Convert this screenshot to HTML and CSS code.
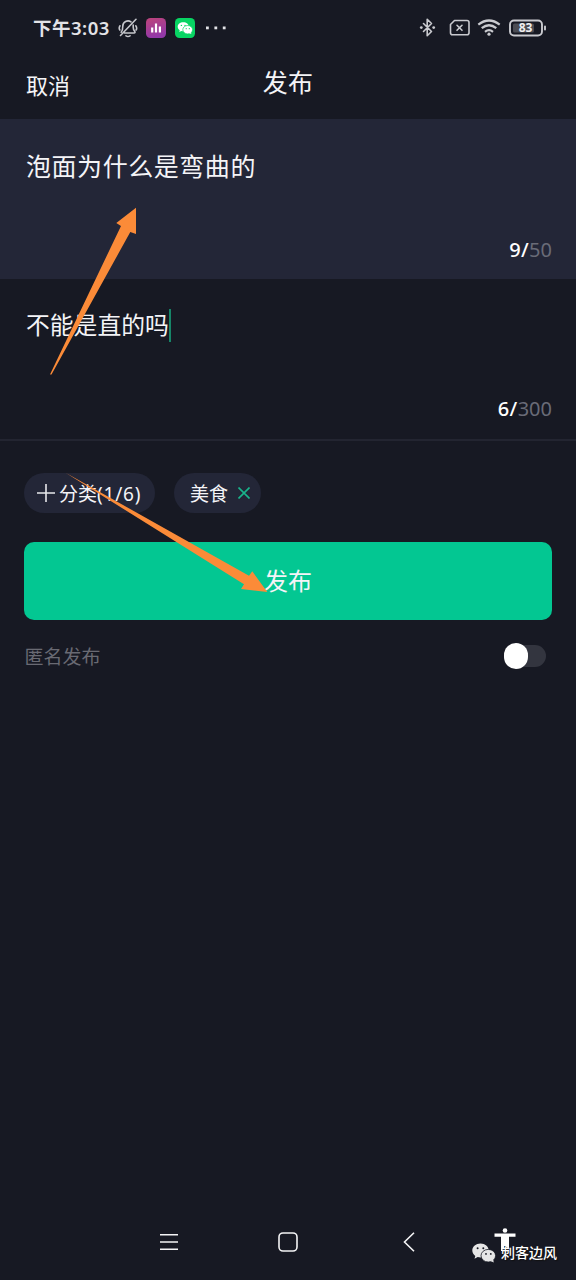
FILE: index.html
```html
<!DOCTYPE html>
<html lang="zh-CN">
<head>
<meta charset="utf-8">
<title>发布</title>
<link rel="stylesheet" href="styles.css">
</head>
<body>
<div class="screen">
  <div class="status">
    <span class="clock">下午3:03</span>
    <svg class="bell" width="20" height="20" viewBox="0 0 20 20" fill="none" stroke="#c6c7cc" stroke-width="1.600" stroke-linecap="round" stroke-linejoin="round">
      <path d="M3.200 14.200C4.800 12.500 4.800 10.500 4.800 8.200A5.200 5.200 0 0 1 13 3.900M15.200 7v2.200c0 2 .4 2.800 1.600 4.400c.5.8.1 1.400-.7 1.400H6.500M8 17.800q2 1.300 4 0M18 1.300L2.500 17.500M2 7.800Q.5 10 1.800 12M17.800 7.800Q19.400 10 18.100 12"/>
    </svg>
    <svg class="stats" width="20" height="20" viewBox="0 0 20 20">
      <defs><linearGradient id="g" x1="0" y1="0" x2=".3" y2="1"><stop offset="0" stop-color="#bd447a"/><stop offset="1" stop-color="#9238a8"/></linearGradient></defs>
      <rect width="20" height="20" rx="4.500" fill="url(#g)"/>
      <path d="M6.200 9.500v5M10 5.500v9M13.900 8.500v6" stroke="#fff" stroke-width="2.200"/>
    </svg>
    <svg class="wechat" width="20" height="20" viewBox="0 0 20 20">
      <rect width="20" height="20" rx="4.500" fill="#08d463"/>
      <path d="M8.300 4.200C5 4.200 2.700 6.200 2.700 8.700c0 1.500.8 2.700 2 3.500l-.4 1.800 2-1c.7.2 1.300.3 2 .3 3.100 0 5.600-2.100 5.600-4.600s-2.500-4.500-5.600-4.500z" fill="#fff"/>
      <ellipse cx="12.700" cy="11.700" rx="4.900" ry="4.200" fill="#fff" stroke="#08d463" stroke-width=".7"/>
      <path d="M14 15l2.300 1-.4-2z" fill="#fff"/>
      <g fill="#08d463"><circle cx="6.400" cy="7.400" r=".7"/><circle cx="10" cy="7.400" r=".7"/><circle cx="11.200" cy="10.700" r=".6"/><circle cx="14.300" cy="10.700" r=".6"/></g>
    </svg>
    <svg class="more" width="22" height="4" viewBox="0 0 22 4" fill="#e3e3e7"><rect x="1" y=".5" width="2.800" height="2.800"/><rect x="9.400" y=".5" width="2.800" height="2.800"/><rect x="17.800" y=".5" width="2.800" height="2.800"/></svg>
    <svg class="system" width="128" height="22" viewBox="0 0 128 22" fill="none" stroke="#c9cacf" stroke-width="1.600" stroke-linejoin="round" stroke-linecap="round">
      <path d="M4.500 6.500l8 8-4.300 4.200V2.300l4.300 4.200-8 8"/>
      <g fill="#c9cacf" stroke="none"><circle cx="2.300" cy="10.600" r="1.400"/><circle cx="14.700" cy="10.600" r="1.400"/></g>
      <path d="M35.500 3.500H48Q50 3.500 50 5.500V15.800Q50 17.800 48 17.800H33.500Q31.500 17.800 31.500 15.800V7.500Z"/>
      <path d="M38 8.300l5 5M43 8.300l-5 5"/>
      <g stroke-width="2.200" stroke-linecap="butt"><path d="M59.300 7.600Q70 -.6 80.700 7.600M62.700 11.200Q70 5.300 77.300 11.200M66 14.800Q70 11.500 74 14.800"/></g>
      <circle cx="70" cy="17.200" r="1.600" fill="#c9cacf" stroke="none"/>
      <rect x="91" y="3.500" width="32" height="15" rx="4" stroke-width="1.900"/>
      <rect x="94" y="6.500" width="21" height="9" rx="1.500" fill="#4b4c53" stroke="none"/>
      <path d="M126 9.500v3" stroke-width="1.900"/>
      <text x="106.500" y="15.300" text-anchor="middle" class="charge">83</text>
    </svg>
  </div>
  <header class="nav"><span class="cancel">取消</span><h1 class="heading">发布</h1></header>
  <section class="field title-field"><p class="title-text">泡面为什么是弯曲的</p><p class="count"><b>9/</b>50</p></section>
  <section class="field body-field"><p class="body-text">不能是直的吗<i class="caret"></i></p><p class="count"><b>6/</b>300</p></section>
  <main class="form">
    <div class="tags">
      <span class="tag add"><svg width="18" height="18" viewBox="0 0 18 18" stroke="#e6e7ea" stroke-width="1.600"><path d="M0 9h18M9 0v18"/></svg><span class="label">分类<span class="ratio">(1/6)</span></span></span>
      <span class="tag food"><span class="label">美食</span><svg width="12" height="12" viewBox="0 0 12 12" stroke="#19b48b" stroke-width="1.600"><path d="M.5.500l11 11M11.500.5l-11 11"/></svg></span>
    </div>
    <div class="submit">发布</div>
    <div class="anonymous"><span class="hint">匿名发布</span><span class="switch"><i class="knob"></i></span></div>
  </main>
  <footer class="system-nav">
    <svg class="menu" width="18" height="18" viewBox="0 0 18 18" stroke="#f4f4f5" stroke-width="1.500"><path d="M0 1.700h18M0 9h18M0 16.300h18"/></svg>
    <svg class="home" width="20" height="20" viewBox="0 0 20 20" fill="none" stroke="#f4f4f5" stroke-width="1.600"><rect x="1" y="1" width="18" height="18" rx="4"/></svg>
    <svg class="back" width="12" height="20" viewBox="0 0 12 20" fill="none" stroke="#f4f4f5" stroke-width="1.600"><path d="M11 .8L1.500 10l9.500 9.200"/></svg>
    <svg class="person" width="22" height="26" viewBox="0 0 22 26" fill="#fff"><circle cx="11" cy="2.500" r="2.300"/><path d="M.5 5.500h21v3.200h-6.500V23h-3v-5h-2v5H7V8.700H.5z"/></svg>
  </footer>
  <div class="watermark">
    <svg width="24" height="20" viewBox="0 0 24 20">
      <path d="M8.500.5C4 .5.300 3.600.300 7.500c0 2.200 1.200 4.100 3 5.400l-.8 2.800 3.200-1.600c1 .3 1.900.4 2.800.4 4.500 0 8.200-3.100 8.200-7S13 .5 8.500.5z" fill="#e6e6e6"/>
      <ellipse cx="16.300" cy="12.700" rx="7.300" ry="6.300" fill="#e6e6e6" stroke="#171923" stroke-width=".8"/>
      <path d="M18.500 18l3.300 1.600-.7-3z" fill="#e6e6e6"/>
      <g fill="#171923"><circle cx="5.600" cy="5.300" r="1"/><circle cx="11.300" cy="5.300" r="1"/><circle cx="14" cy="10.900" r=".9"/><circle cx="18.800" cy="10.900" r=".9"/></g>
    </svg><span>刺客边风</span>
  </div>
  <svg class="arrows" width="576" height="1280" viewBox="0 0 576 1280" fill="#fb8b38">
    <path d="M50 374.500L121 226l-4.700-3L136 207.700V234l-5.700-2L51.500 374.500z"/>
    <path d="M65.500 472.700L249 575.700l3.300-4.400 15 20.700-26.300-3 3-4.700z"/>
  </svg>
</div>
</body>
</html>
```
FILE: styles.css
```css
* { box-sizing: border-box; }
body { margin: 0; background: #171923; color: #f4f4f7; font-family: "Noto Sans", "Noto Sans CJK SC", sans-serif; }
h1, p { margin: 0; font-weight: 400; }
svg { display: block; flex: none; }
.screen { position: relative; width: 576px; height: 1280px; display: flex; flex-direction: column; overflow: hidden; white-space: nowrap; }
.status { height: 56px; display: flex; align-items: center; padding-left: 33px; }
.clock { width: 85px; font-size: 18.5px; line-height: 24px; font-weight: 600; letter-spacing: .5px; color: #e3e3e7; }
.stats { margin-left: 8px; margin-top: -1px; }
.wechat { margin-left: 9px; margin-top: -1px; }
.more { margin-left: 10px; margin-top: -1px; }
.system { margin-left: 192px; }
.charge { fill: #eeeeef; stroke: none; font: 700 12px "Noto Sans", sans-serif; }
.nav { height: 63px; display: grid; grid-template-columns: 1fr auto 1fr; padding: 0 26px; }
.cancel { font-size: 22px; line-height: 30px; padding-top: 14px; }
.heading { font-size: 25px; line-height: 32px; padding-top: 10px; letter-spacing: .3px; }
.field { height: 160px; display: flex; flex-direction: column; justify-content: space-between; padding: 29px 24px 15px 26px; }
.title-field { background: #232637; }
.body-field { height: 162px; border-bottom: 2px solid #232531; padding-bottom: 16px; padding-top: 28px; }
.title-text { font-size: 25px; line-height: 36px; letter-spacing: .55px; }
.body-text { display: flex; align-items: center; font-size: 23.8px; line-height: 36px; }
.caret { width: 2px; height: 33px; background: #168568; }
.count { align-self: flex-end; font-size: 20px; line-height: 28px; color: #696b77; }
.count b { color: #fff; font-weight: 500; letter-spacing: .4px; }
.form { flex: 1; padding: 32px 24px 0; }
.tags { display: flex; gap: 19px; }
.tag { height: 40px; display: flex; align-items: center; border-radius: 20px; background: #232637; font-size: 19px; line-height: 28px; }
.label { padding-top: 1px; }
.ratio { letter-spacing: .8px; }
.add { width: 131px; padding-left: 13px; gap: 4px; }
.food { width: 87px; padding-left: 16px; gap: 10px; }
.submit { height: 78px; margin-top: 29px; border-radius: 10px; background: #03c792; font-size: 24px; line-height: 78px; text-align: center; }
.anonymous { height: 26px; margin-top: 23px; padding-right: 6px; display: flex; align-items: center; justify-content: space-between; font-size: 19px; line-height: 26px; color: #696a73; }
.hint { padding: 2px 0 0 .5px; }
.switch { width: 41px; height: 22px; border-radius: 11px; background: #33353f; display: flex; align-items: center; }
.knob { width: 24px; height: 26px; border-radius: 12px; background: #fff; margin-left: -1px; flex: none; }
.system-nav { height: 52px; display: grid; grid-template-columns: 118px 125px 91px 22px; padding-left: 160px; align-items: start; }
.menu { margin-top: 5px; }
.home, .back { margin-top: 4px; }
.watermark { position: absolute; left: 472px; top: 1240px; display: flex; align-items: center; gap: 5px; font-size: 14px; line-height: 26px; font-weight: 500; color: #fff; text-shadow: 1px 1px 1px #111; }
.arrows { position: absolute; left: 0; top: 0; }
```
